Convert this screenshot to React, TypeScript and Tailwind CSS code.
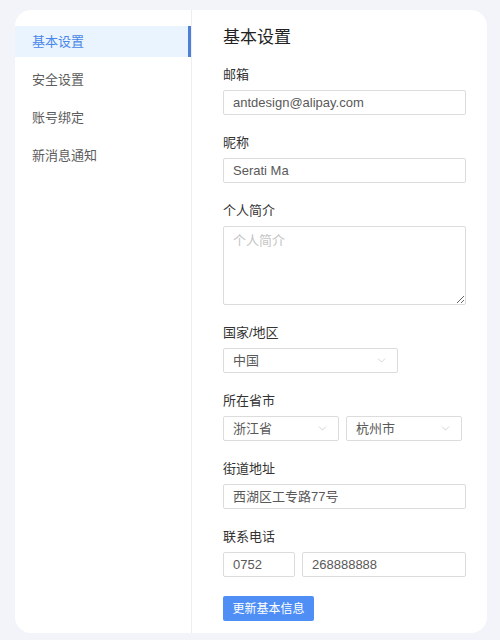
import { ChevronDown } from 'lucide-react'

const menu = ['基本设置', '安全设置', '账号绑定', '新消息通知']

function Label({ children }: { children: React.ReactNode }) {
  return <div className="h-5 leading-5 text-[13px] text-[#333] mb-[5px]">{children}</div>
}

function Field({ children, className = '' }: { children: React.ReactNode; className?: string }) {
  return <div className={`h-[25px] border border-[#dcdcdc] rounded-[2px] bg-white flex items-center px-[9px] text-[13px] text-[#595959] ${className}`}>{children}</div>
}

function Select({ value, className = '' }: { value: string; className?: string }) {
  return (
    <Field className={`justify-between ${className}`}>
      <span>{value}</span>
      <ChevronDown size={13} strokeWidth={1.2} className="text-[#bbb]" />
    </Field>
  )
}

export default function App() {
  return (
    <div
      className="w-[500px] h-[640px] bg-[#f3f4fa] pt-[10px] pl-[15px] pr-[13px] pb-[7px]"
      style={{ fontFamily: '"Liberation Sans", "Noto Sans CJK SC", sans-serif' }}
    >
      <div className="h-[623px] bg-white rounded-2xl flex overflow-hidden">
        <div className="w-[177px] shrink-0 border-r border-[#eeeeee] pt-4 flex flex-col gap-[7px]">
          {menu.map((m, i) => (
            <div
              key={m}
              className={
                i === 0
                  ? 'h-[31px] flex items-center pl-[17px] text-[13px] text-[#4a86e8] bg-[#e9f4ff] border-r-[3px] border-[#4d7fd6]'
                  : 'h-[31px] flex items-center pl-[17px] text-[13px] text-[#5c5c5c]'
              }
            >
              {m}
            </div>
          ))}
        </div>
        <div className="flex-1 pl-[31px] pr-[21px] pt-[16px]">
          <div className="text-[17px] leading-6 text-[#222] mb-[15px]">基本设置</div>

          <Label>邮箱</Label>
          <Field>antdesign@alipay.com</Field>

          <div className="mt-[18px]">
            <Label>昵称</Label>
            <Field>Serati Ma</Field>
          </div>

          <div className="mt-[18px]">
            <Label>个人简介</Label>
            <textarea
              placeholder="个人简介"
              className="block w-full h-[79px] border border-[#dcdcdc] rounded-[2px] px-[9px] py-[4px] text-[13px] text-[#555] placeholder-[#c4c4c4] outline-none"
            />
          </div>

          <div className="mt-[18px]">
            <Label>国家/地区</Label>
            <Select value="中国" className="w-[175px]" />
          </div>

          <div className="mt-[18px]">
            <Label>所在省市</Label>
            <div className="flex gap-[7px]">
              <Select value="浙江省" className="w-[116px]" />
              <Select value="杭州市" className="w-[116px]" />
            </div>
          </div>

          <div className="mt-[18px]">
            <Label>街道地址</Label>
            <Field>西湖区工专路77号</Field>
          </div>

          <div className="mt-[18px]">
            <Label>联系电话</Label>
            <div className="flex gap-[7px]">
              <Field className="w-[72px]">0752</Field>
              <Field className="flex-1">268888888</Field>
            </div>
          </div>

          <button className="mt-[19px] h-[25px] w-[91px] bg-[#4f8ff5] text-white text-[12px] rounded-[2px]">
            更新基本信息
          </button>
        </div>
      </div>
    </div>
  )
}
